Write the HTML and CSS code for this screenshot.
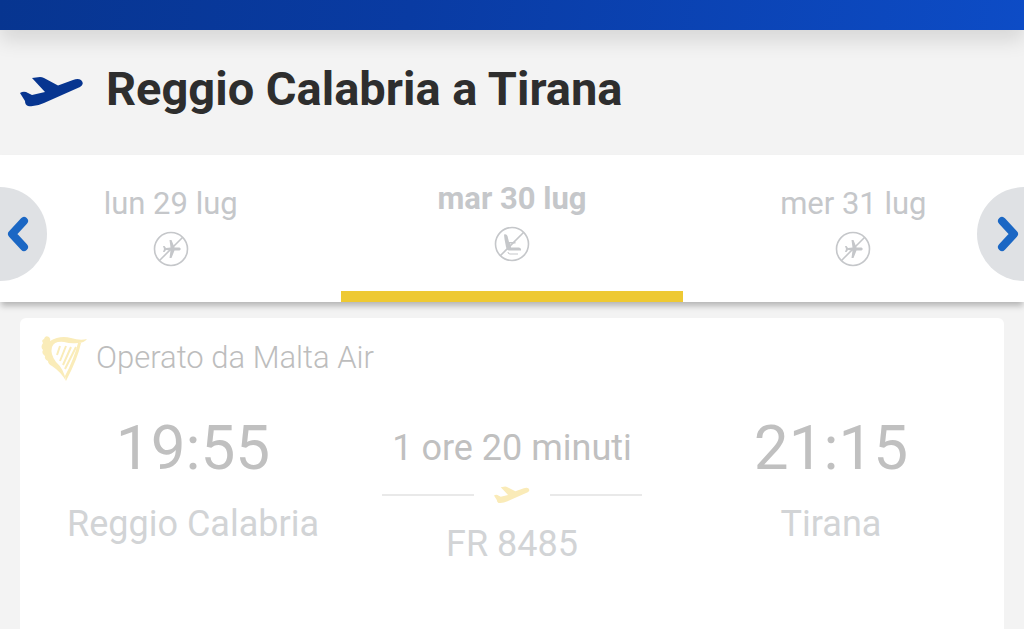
FILE: index.html
```html
<!DOCTYPE html>
<html lang="it">
<head>
  <meta charset="UTF-8" />
  <meta name="viewport" content="width=device-width, initial-scale=1.0"/>
  <title>Reggio Calabria a Tirana</title>
  <link rel="stylesheet" href="styles.css">
</head>

<body>
  <!-- Shared icons -->
  <svg class="icon-defs" aria-hidden="true">
    <symbol id="plane" viewBox="0 0 64 30">
      <path d="M12 1L20 0Q22 0 24 1L38 8.500L53 3Q58 1 61 3Q65 7 60 10L24 26Q16 30 8 29Q5 28 5 24L0 16Q3 14 6 15L12 18L25 15Z"/>
    </symbol>
    <symbol id="no-flight" viewBox="0 0 36 36">
      <circle cx="18" cy="18" r="16.500" fill="none" stroke="currentColor" stroke-width="1.600"/>
      <path d="M6.500 29.500L29.500 6.500" stroke="currentColor" stroke-width="1.600"/>
      <path d="M10 15H11.500L13 17L17.500 16.500L16.500 9H18.500L21.500 16.500H26.500Q29 18 26.500 19.500H21.500L18.500 27H16.500L17.500 19.500L13 19L11.500 21H10L11 18Z" fill="currentColor"/>
    </symbol>
    <symbol id="no-seat" viewBox="0 0 36 36">
      <circle cx="18" cy="18" r="16.500" fill="none" stroke="currentColor" stroke-width="1.600"/>
      <path d="M6.500 29.500L29.500 6.500" stroke="currentColor" stroke-width="1.600"/>
      <path d="M10 8.500Q12.500 7.500 13.500 10L15 16H21.500V17.500H16L17 21.500H25Q27.500 22 27 24.500H15Q13 24.500 12 21L10.500 13Z" fill="currentColor"/>
      <path d="M14 26Q14 28 16 28H24" fill="none" stroke="currentColor"/>
    </symbol>
  </svg>

  <div class="top-bar"></div>

  <header class="route-header">
    <svg class="route-icon" aria-hidden="true"><use href="#plane"/></svg>
    <h1 class="route-title">Reggio Calabria a Tirana</h1>
  </header>

  <!-- Date carousel -->
  <nav class="date-nav" aria-label="Date">
    <button class="arrow arrow-prev" aria-label="Precedente">
      <svg viewBox="0 0 22 36" aria-hidden="true"><path d="M17 5L5 18L17 31"/></svg>
    </button>
    <button class="date">
      <span>lun 29 lug</span>
      <svg class="date-icon" aria-hidden="true"><use href="#no-flight"/></svg>
    </button>
    <button class="date active">
      <span>mar 30 lug</span>
      <svg class="date-icon" aria-hidden="true"><use href="#no-seat"/></svg>
    </button>
    <button class="date">
      <span>mer 31 lug</span>
      <svg class="date-icon" aria-hidden="true"><use href="#no-flight"/></svg>
    </button>
    <button class="arrow arrow-next" aria-label="Successivo">
      <svg viewBox="0 0 22 36" aria-hidden="true"><path d="M5 5L17 18L5 31"/></svg>
    </button>
  </nav>

  <!-- Flight card -->
  <main class="flight-card">
    <div class="operator">
      <svg class="harp" viewBox="0 0 48 48" aria-hidden="true">
        <path d="M3 9Q1 6 4 5Q5 1 9 3Q11 5 10 7Q20 1 31 4Q40 7 47 5Q44 9 38 9Q31 10 24 8Q14 7 12 13Q10 20 16 28Q24 35 26 47Q21 38 12 32Q8 30 8 27Q4 25 5 22Q1 19 3 16Q0 13 3 9Z"/>
        <path d="M38 9L41 9Q38 24 26 47L25 42Q34 25 38 9Z"/>
        <path class="strings" d="M20 12L17 21M26 12L20 27M31 13L23 31M36 13L25 35"/>
      </svg>
      <span>Operato da Malta Air</span>
    </div>

    <div class="flight">
      <div class="stop">
        <div class="time">19:55</div>
        <div class="city">Reggio Calabria</div>
      </div>
      <div class="duration">
        <div class="duration-time">1 ore 20 minuti</div>
        <div class="duration-line">
          <svg class="small-plane" aria-hidden="true"><use href="#plane"/></svg>
        </div>
        <div class="flight-number">FR 8485</div>
      </div>
      <div class="stop">
        <div class="time">21:15</div>
        <div class="city">Tirana</div>
      </div>
    </div>
  </main>
</body>
</html>
```
FILE: styles.css
```css
* {
  margin: 0;
  padding: 0;
  box-sizing: border-box;
  font-family: Roboto, sans-serif;
}

body {
  display: flex;
  flex-direction: column;
  min-height: 100vh;
  background-color: #f3f3f3;
  color: #2e2e2e;
  overflow-x: hidden;
}

.icon-defs {
  position: absolute;
  width: 0;
  height: 0;
}

.top-bar {
  height: 30px;
  flex-shrink: 0;
  background: linear-gradient(100deg, #073590, #093ba3 40%, #0d4cc6);
  box-shadow: 0 10px 20px rgba(0, 0, 0, 0.12);
}

.route-header {
  display: flex;
  align-items: center;
  gap: 22px;
  padding: 31px 20px 38px;
}

.route-icon {
  width: 64px;
  height: 30px;
  margin-top: 6px;
  fill: #073590;
}

.route-title {
  font-size: 47px;
  line-height: 56px;
  font-weight: 700;
}

.date-nav {
  position: relative;
  display: grid;
  grid-template-columns: 1fr 1fr 1fr;
  background-color: #fff;
  box-shadow: 0 5px 6px -1px rgba(0, 0, 0, 0.25);
}

.date {
  display: flex;
  flex-direction: column;
  align-items: center;
  gap: 8px;
  height: 147px;
  padding-top: 30px;
  border: none;
  background: none;
  color: #c5c7ca;
  font-size: 31px;
  line-height: 38px;
  cursor: pointer;
}

.date.active {
  padding-top: 25px;
  border-bottom: 11px solid #eec933;
  font-weight: 700;
}

.date-icon {
  width: 36px;
  height: 36px;
}

/* Half circles over the ends of the carousel */
.arrow {
  position: absolute;
  top: 32px;
  width: 47px;
  height: 94px;
  display: flex;
  align-items: center;
  border: none;
  background-color: #dfe1e4;
  cursor: pointer;
}

.arrow-prev {
  left: 0;
  padding-left: 7px;
  border-radius: 0 47px 47px 0;
}

.arrow-next {
  right: 0;
  padding-right: 5px;
  justify-content: flex-end;
  border-radius: 47px 0 0 47px;
}

.arrow svg {
  width: 22px;
  height: 36px;
  fill: none;
  stroke: #1b67c4;
  stroke-width: 8;
  stroke-linecap: round;
  stroke-linejoin: round;
}

.flight-card {
  flex: 1;
  margin: 16px 20px 0;
  padding: 16px 20px;
  background-color: #fff;
  border-radius: 6px 6px 0 0;
}

.operator {
  display: flex;
  align-items: center;
  gap: 8px;
  font-size: 31px;
  line-height: 48px;
  font-weight: 300;
  color: #bdbdbd;
}

.harp {
  width: 48px;
  height: 48px;
  fill: #faecb9;
}

.harp .strings {
  fill: none;
  stroke: #faecb9;
  stroke-width: 2;
}

.flight {
  display: grid;
  grid-template-columns: 306px 1fr 306px;
  margin-top: 28px;
  text-align: center;
}

.time {
  font-size: 62px;
  line-height: 76px;
  color: #c0c0c0;
}

.city,
.duration-time,
.flight-number {
  font-size: 36px;
  line-height: 44px;
  color: #d2d4d6;
}

.city {
  margin-top: 16px;
}

.duration {
  padding: 16px 36px 0;
}

.duration-time {
  color: #c0c0c0;
}

.duration-line {
  display: flex;
  align-items: center;
  gap: 20px;
  margin: 16px 0 18px;
}

.duration-line::before,
.duration-line::after {
  content: "";
  flex: 1;
  height: 2px;
  background-color: #e9e9e9;
}

.small-plane {
  width: 36px;
  height: 18px;
  fill: #faebb8;
}
```
